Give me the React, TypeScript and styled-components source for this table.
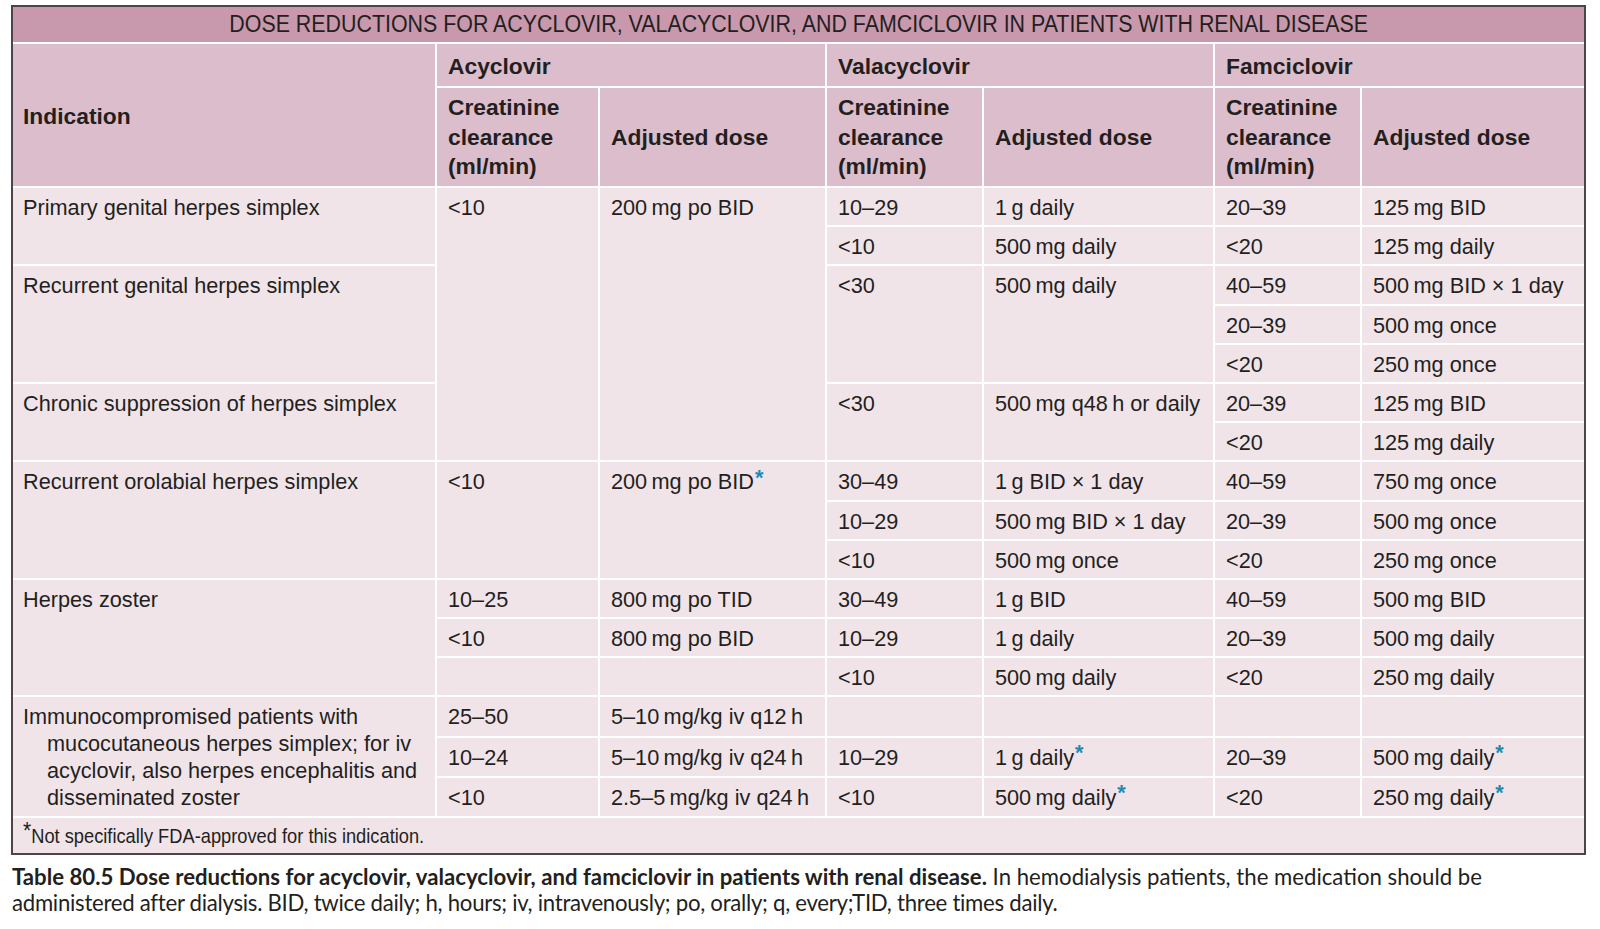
import React from "react";
import styled, { createGlobalStyle } from "styled-components";

const Global = createGlobalStyle`
  html, body { margin: 0; padding: 0; background: #ffffff; }
  body { font-family: "Liberation Sans", Arial, sans-serif; color: #231f20; }
`;

const Page = styled.div`
  padding: 5px 0 0 11px;
  width: 1575px;
`;

const Frame = styled.div`
  border: 2px solid #4d434a;
  background: #f0e4e9;
`;

const Table = styled.table`
  width: 100%;
  table-layout: fixed;
  border-collapse: collapse;
  border-style: hidden;
  font-size: 21.7px;
  line-height: 27px;
`;

const TitleCell = styled.th`
  background: #c898ad;
  border: 2px solid #ffffff;
  padding: 5px 0 5px;
  line-height: 24px;
  font-weight: normal;
  text-align: center;
  white-space: nowrap;
  overflow: hidden;
`;

const TitleText = styled.span`
  display: inline-block;
  font-size: 23.5px;
  transform: scaleX(0.91);
  transform-origin: center;
`;

const Head = styled.th<{ $tall?: boolean; $mid?: boolean }>`
  background: #dcbdcb;
  border: 2px solid #ffffff;
  font-size: 22.8px;
  font-weight: bold;
  text-align: left;
  line-height: ${(p) => (p.$tall ? "29.5px" : "27px")};
  padding: ${(p) => (p.$tall ? "5px 8px 4.5px 11px" : "9px 8px 6px 11px")};
  vertical-align: ${(p) => (p.$mid ? "middle" : "top")};
`;

const Td = styled.td<{ $first?: boolean }>`
  border: 2px solid #ffffff;
  padding: ${(p) => (p.$first ? "6px 6px 4.2px 10px" : "6px 6px 4.2px 11px")};
  vertical-align: top;
  white-space: nowrap;
`;

const Hanging = styled.td`
  border: 2px solid #ffffff;
  padding: 6px 6px 4.2px 34px;
  text-indent: -24px;
  vertical-align: middle;
  white-space: nowrap;
`;

const Star = styled.span`
  color: #1d8bb3;
  font-weight: bold;
  position: relative;
  top: -0.22em;
  font-size: 1em;
  margin-left: 1px;
`;

const NoteCell = styled.td`
  border: 2px solid #ffffff;
  padding: 5px 0 5px 10px;
  line-height: 24px;
  vertical-align: middle;
  white-space: nowrap;
`;

const NoteText = styled.span`
  display: inline-block;
  font-size: 21px;
  transform: scaleX(0.87);
  transform-origin: left center;
`;

const NoteStar = styled.span`
  position: relative;
  top: -0.15em;
  font-size: 1.15em;
`;

const Caption = styled.p`
  margin: 9px 0 0 1px;
  font-family: Lato, "Open Sans", sans-serif;
  font-size: 22.2px;
  line-height: 26px;
  color: #231f20;
  white-space: nowrap;
`;

const CapBold = styled.span`
  font-weight: bold;
`;

const CapTight = styled.span`
  letter-spacing: -0.28px;
`;

type Cell = { t?: React.ReactNode; rs?: number; first?: boolean; hang?: boolean };

const S = "\u2009";
const star = <Star>*</Star>;

const rows: Cell[][] = [
  [
    { t: "Primary genital herpes simplex", rs: 2, first: true },
    { t: "<10", rs: 7 },
    { t: `200${S}mg po BID`, rs: 7 },
    { t: "10–29" },
    { t: `1${S}g daily` },
    { t: "20–39" },
    { t: `125${S}mg BID` },
  ],
  [{ t: "<10" }, { t: `500${S}mg daily` }, { t: "<20" }, { t: `125${S}mg daily` }],
  [
    { t: "Recurrent genital herpes simplex", rs: 3, first: true },
    { t: "<30", rs: 3 },
    { t: `500${S}mg daily`, rs: 3 },
    { t: "40–59" },
    { t: `500${S}mg BID × 1 day` },
  ],
  [{ t: "20–39" }, { t: `500${S}mg once` }],
  [{ t: "<20" }, { t: `250${S}mg once` }],
  [
    { t: "Chronic suppression of herpes simplex", rs: 2, first: true },
    { t: "<30", rs: 2 },
    { t: `500${S}mg q48${S}h or daily`, rs: 2 },
    { t: "20–39" },
    { t: `125${S}mg BID` },
  ],
  [{ t: "<20" }, { t: `125${S}mg daily` }],
  [
    { t: "Recurrent orolabial herpes simplex", rs: 3, first: true },
    { t: "<10", rs: 3 },
    { t: <>200{S}mg po BID{star}</>, rs: 3 },
    { t: "30–49" },
    { t: `1${S}g BID × 1 day` },
    { t: "40–59" },
    { t: `750${S}mg once` },
  ],
  [{ t: "10–29" }, { t: `500${S}mg BID × 1 day` }, { t: "20–39" }, { t: `500${S}mg once` }],
  [{ t: "<10" }, { t: `500${S}mg once` }, { t: "<20" }, { t: `250${S}mg once` }],
  [
    { t: "Herpes zoster", rs: 3, first: true },
    { t: "10–25" },
    { t: `800${S}mg po TID` },
    { t: "30–49" },
    { t: `1${S}g BID` },
    { t: "40–59" },
    { t: `500${S}mg BID` },
  ],
  [
    { t: "<10" },
    { t: `800${S}mg po BID` },
    { t: "10–29" },
    { t: `1${S}g daily` },
    { t: "20–39" },
    { t: `500${S}mg daily` },
  ],
  [{}, {}, { t: "<10" }, { t: `500${S}mg daily` }, { t: "<20" }, { t: `250${S}mg daily` }],
  [
    {
      t: (
        <>
          Immunocompromised patients with
          <br />
          mucocutaneous herpes simplex; for iv
          <br />
          acyclovir, also herpes encephalitis and
          <br />
          disseminated zoster
        </>
      ),
      rs: 3,
      hang: true,
    },
    { t: "25–50" },
    { t: `5–10${S}mg/kg iv q12${S}h` },
    {},
    {},
    {},
    {},
  ],
  [
    { t: "10–24" },
    { t: `5–10${S}mg/kg iv q24${S}h` },
    { t: "10–29" },
    { t: <>1{S}g daily{star}</> },
    { t: "20–39" },
    { t: <>500{S}mg daily{star}</> },
  ],
  [
    { t: "<10" },
    { t: `2.5–5${S}mg/kg iv q24${S}h` },
    { t: "<10" },
    { t: <>500{S}mg daily{star}</> },
    { t: "<20" },
    { t: <>250{S}mg daily{star}</> },
  ],
];

const widths = [423, 163, 227, 157, 231, 147, 223];

const Creat = () => (
  <>
    Creatinine
    <br />
    clearance
    <br />
    (ml/min)
  </>
);

export default function App() {
  return (
    <>
      <Global />
      <Page>
        <Frame>
          <Table>
            <colgroup>
              {widths.map((w, i) => (
                <col key={i} style={{ width: w }} />
              ))}
            </colgroup>
            <thead>
              <tr>
                <TitleCell colSpan={7}>
                  <TitleText>
                    DOSE REDUCTIONS FOR ACYCLOVIR, VALACYCLOVIR, AND FAMCICLOVIR IN PATIENTS WITH RENAL DISEASE
                  </TitleText>
                </TitleCell>
              </tr>
              <tr>
                <Head rowSpan={2} $mid style={{ paddingLeft: 10 }}>
                  Indication
                </Head>
                <Head colSpan={2}>Acyclovir</Head>
                <Head colSpan={2}>Valacyclovir</Head>
                <Head colSpan={2}>Famciclovir</Head>
              </tr>
              <tr>
                <Head $tall>
                  <Creat />
                </Head>
                <Head $tall $mid>
                  Adjusted dose
                </Head>
                <Head $tall>
                  <Creat />
                </Head>
                <Head $tall $mid>
                  Adjusted dose
                </Head>
                <Head $tall>
                  <Creat />
                </Head>
                <Head $tall $mid>
                  Adjusted dose
                </Head>
              </tr>
            </thead>
            <tbody>
              {rows.map((r, i) => (
                <tr key={i}>
                  {r.map((c, j) =>
                    c.hang ? (
                      <Hanging key={j} rowSpan={c.rs}>
                        {c.t}
                      </Hanging>
                    ) : (
                      <Td key={j} rowSpan={c.rs} $first={c.first}>
                        {c.t}
                      </Td>
                    )
                  )}
                </tr>
              ))}
              <tr>
                <NoteCell colSpan={7}>
                  <NoteText>
                    <NoteStar>*</NoteStar>Not specifically FDA-approved for this indication.
                  </NoteText>
                </NoteCell>
              </tr>
            </tbody>
          </Table>
        </Frame>
        <Caption>
          <CapBold>
            Table 80.5 Dose reductions for acyclovir, valacyclovir, and famciclovir in patients with renal disease.
          </CapBold>{" "}
          In hemodialysis patients, the medication should be
          <br />
          <CapTight>
            administered after dialysis. BID, twice daily; h, hours; iv, intravenously; po, orally; q, every;TID, three
            times daily.
          </CapTight>
        </Caption>
      </Page>
    </>
  );
}
